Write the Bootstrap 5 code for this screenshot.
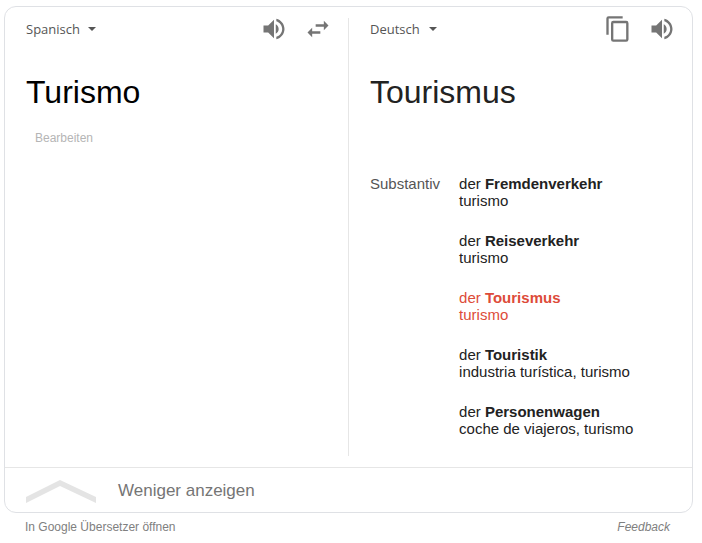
<!DOCTYPE html>
<html lang="de">
<head>
<meta charset="utf-8">
<meta name="viewport" content="width=device-width, initial-scale=1">
<title>Übersetzer</title>
<link href="https://cdn.jsdelivr.net/npm/bootstrap@5.3.0/dist/css/bootstrap.min.css" rel="stylesheet">
<style>
body { font-family: "Liberation Sans", Arial, sans-serif; color: #222; background: #fff; padding: 6px 9px 0 4px; }
.translator { border: 1px solid #dfe1e5; border-radius: 12px; }
.pane { flex: 1 1 0; min-width: 0; padding: 8px 16px 30px 21px; }
.divider { width: 1px; margin: 11px 0; background: #e6e6e6; }
.pane-head { height: 28px; gap: 16px; margin-bottom: 29px; }
.lang {
  width: 72px; padding: 0; border: 0; background-color: transparent;
  font-family: "Open Sans", "Noto Sans", sans-serif; font-size: 13px; line-height: 20px; color: #555;
  background-image: url("data:image/svg+xml,%3Csvg xmlns='http://www.w3.org/2000/svg' viewBox='0 0 8 4'%3E%3Cpath fill='%23555' d='M0 0h8L4 4z'/%3E%3C/svg%3E");
  background-size: 8px 4px; background-position: right 2px center;
}
.lang-target { width: 69px; }
.icon-btn { padding: 0; border: 0; color: #757575; line-height: 1; }
.icon-btn svg { width: 28px; height: 28px; fill: currentColor; display: block; }
.phrase { font-size: 32px; line-height: 40px; font-weight: 400; margin: 0; }
.source { color: #000; }
.edit { margin: 18px 0 0 9px; padding: 0; border: 0; font-size: 12px; line-height: 16px; color: #b5b5b5; }
.dictionary { margin-top: 63px; gap: 19px; font-size: 15px; line-height: 17px; }
.word-class { color: #555; }
.entries { gap: 23px; }
.current { color: #dd4b39; }
.less { height: 45px; padding: 2px 21px 0; gap: 22px; border: 0; border-top: 1px solid #e6e6e6; border-radius: 0; font-size: 17px; line-height: 20px; color: #757575; }
.chevron { width: 70px; height: 24px; flex: none; }
.below { padding: 6px 23px 6px 21px; font-size: 12px; line-height: 16px; }
.below a { color: #808080; }
</style>
</head>
<body>
<main class="translator">
  <div class="d-flex">
    <section class="pane">
      <div class="pane-head d-flex align-items-center">
        <select class="form-select lang me-auto" aria-label="Ausgangssprache"><option>Spanisch</option></select>
        <button type="button" class="btn icon-btn" aria-label="Anhören"><svg viewBox="0 0 24 24"><path d="M3 9v6h4l5 5V4L7 9H3zm10.500-1.030v8.050A4.500 4.500 0 0 0 16 12c0-1.770-1-3.290-2.500-4.030zM14 3.230v2.060c2.890.86 5 3.540 5 6.710s-2.110 5.850-5 6.710v2.060c4.010-.91 7-4.490 7-8.770s-2.990-7.860-7-8.770z"/></svg></button>
        <button type="button" class="btn icon-btn" aria-label="Sprachen tauschen"><svg viewBox="0 0 24 24"><path d="M7 11l-4 4 4 4v-3h7v-2H7v-3zm14-2l-4-4v3h-7v2h7v3l4-4z"/></svg></button>
      </div>
      <h1 class="phrase source">Turismo</h1>
      <button type="button" class="btn edit d-block">Bearbeiten</button>
    </section>
    <div class="divider"></div>
    <section class="pane">
      <div class="pane-head d-flex align-items-center">
        <select class="form-select lang lang-target me-auto" aria-label="Zielsprache"><option>Deutsch</option></select>
        <button type="button" class="btn icon-btn" aria-label="Kopieren"><svg viewBox="0 0 24 24"><path d="M16 1H4a2 2 0 0 0-2 2v14h2V3h12V1zm3 4H8a2 2 0 0 0-2 2v14a2 2 0 0 0 2 2h11a2 2 0 0 0 2-2V7a2 2 0 0 0-2-2zm0 16H8V7h11v14z"/></svg></button>
        <button type="button" class="btn icon-btn" aria-label="Anhören"><svg viewBox="0 0 24 24"><path d="M3 9v6h4l5 5V4L7 9H3zm10.500-1.030v8.050A4.500 4.500 0 0 0 16 12c0-1.770-1-3.290-2.500-4.030zM14 3.230v2.060c2.890.86 5 3.540 5 6.710s-2.110 5.850-5 6.710v2.060c4.010-.91 7-4.490 7-8.770s-2.990-7.860-7-8.770z"/></svg></button>
      </div>
      <h2 class="phrase">Tourismus</h2>
      <div class="dictionary d-flex">
        <div class="word-class">Substantiv</div>
        <div class="entries d-flex flex-column">
          <div>der <b>Fremdenverkehr</b><br>turismo</div>
          <div>der <b>Reiseverkehr</b><br>turismo</div>
          <div class="current">der <b>Tourismus</b><br>turismo</div>
          <div>der <b>Touristik</b><br>industria turística, turismo</div>
          <div>der <b>Personenwagen</b><br>coche de viajeros, turismo</div>
        </div>
      </div>
    </section>
  </div>
  <button type="button" class="btn less w-100 d-flex align-items-center text-start">
    <svg class="chevron" viewBox="0 0 70 24"><path fill="#e4e4e4" d="M0 18L34 1l36 17v6L34 7 0 24z"/></svg>
    <span>Weniger anzeigen</span>
  </button>
</main>
<footer class="below d-flex justify-content-between">
  <a href="#" class="text-decoration-none">In Google Übersetzer öffnen</a>
  <a href="#" class="text-decoration-none fst-italic">Feedback</a>
</footer>
<script src="https://cdn.jsdelivr.net/npm/bootstrap@5.3.0/dist/js/bootstrap.bundle.min.js"></script>
</body>
</html>
